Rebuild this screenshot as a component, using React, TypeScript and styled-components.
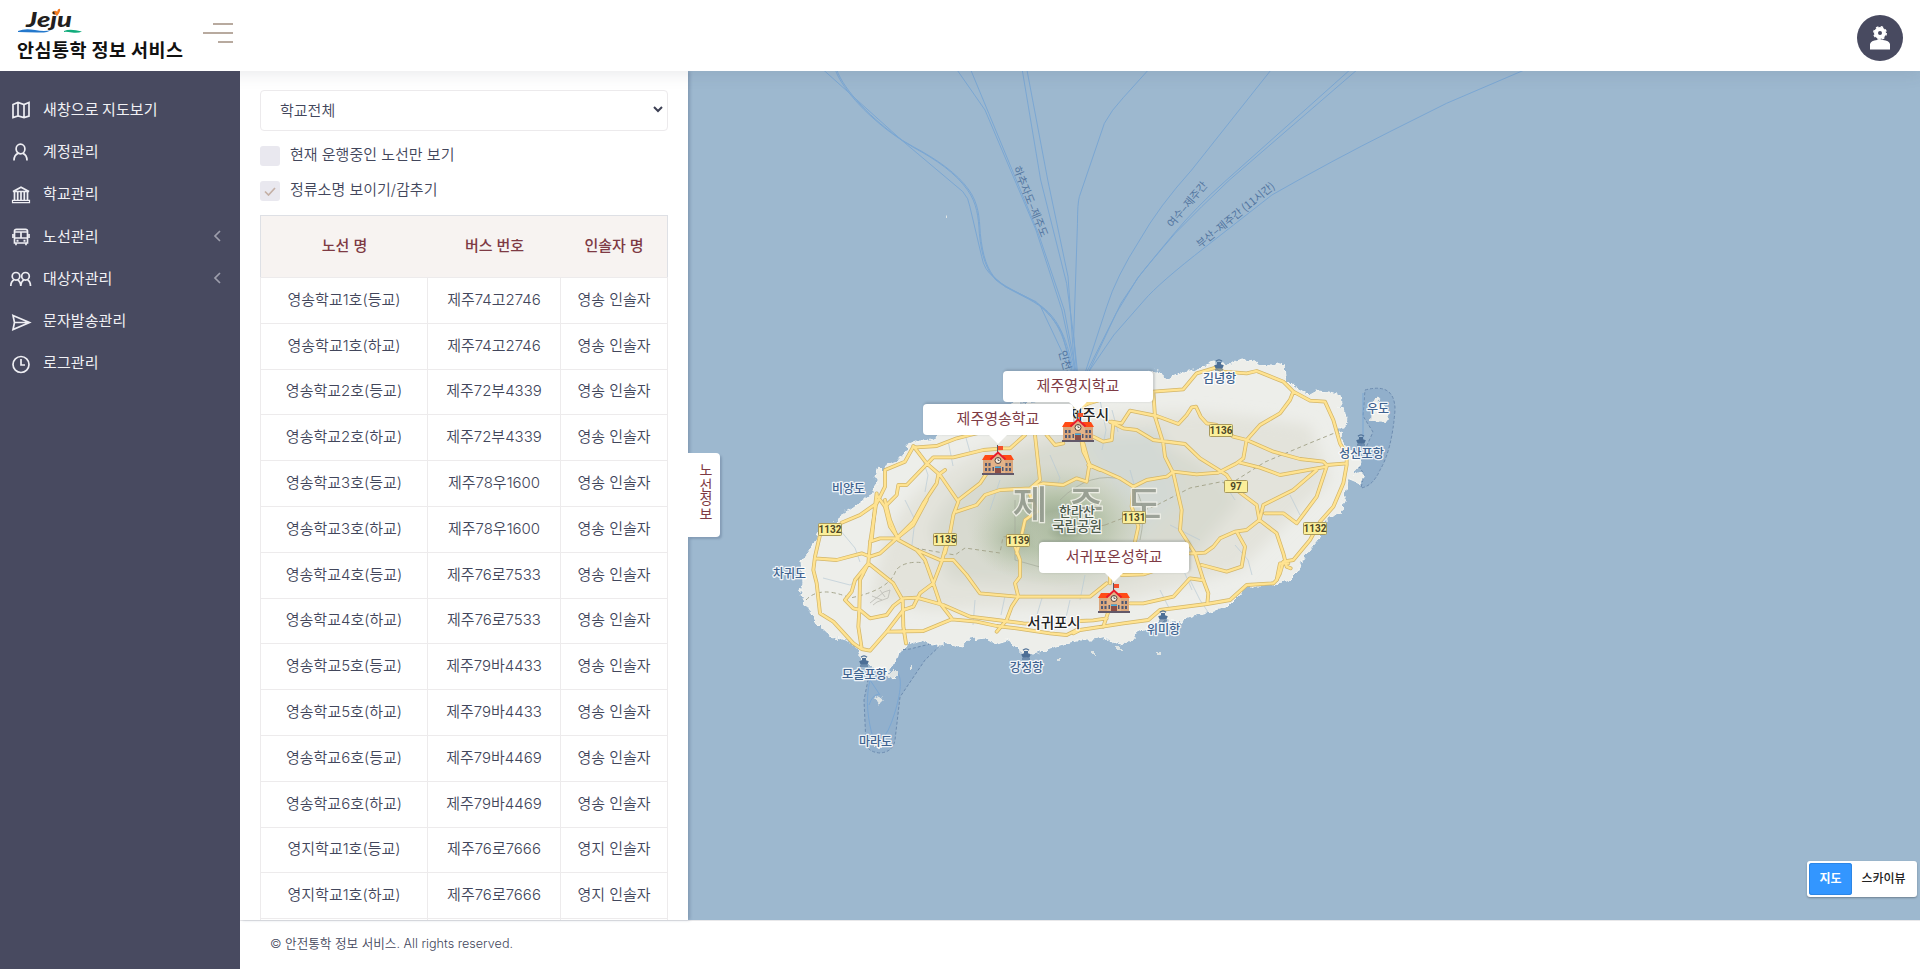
import React from "react";
import styled, { createGlobalStyle } from "styled-components";

const font = `"Inter", "Noto Sans CJK KR", sans-serif`;
const krFont = `"Noto Sans CJK KR", sans-serif`;

const GlobalStyle = createGlobalStyle`
  * { box-sizing: border-box; }
  body { margin: 0; font-family: ${font}; font-size: 15px; font-weight: 350; color: #42465b; background: #fff; overflow: hidden; }
`;

const Page = styled.div`
  display: flex;
  flex-direction: column;
  width: 1920px;
  height: 969px;
`;

const Header = styled.header`
  flex: none;
  height: 71px;
  display: flex;
  align-items: flex-start;
  justify-content: space-between;
  padding-right: 17px;
  background: #fff;
  position: relative;
  z-index: 3;
  box-shadow: 0 2px 16px rgba(70, 75, 95, 0.13);
`;

const Brand = styled.div`
  display: flex;
`;

const Logo = styled.div`
  width: 186px;
  padding: 6px 0 0 17px;
  font-family: ${krFont};
  svg { display: block; overflow: visible; }
`;

const LogoTitle = styled.div`
  margin-top: 1px;
  font-size: 18.5px;
  line-height: 28px;
  font-weight: 700;
  letter-spacing: 0.45px;
  color: #111;
  white-space: nowrap;
`;

const MenuButton = styled.div`
  width: 30px;
  margin: 23px 0 0 17px;
  display: flex;
  flex-direction: column;
  align-items: flex-end;
  gap: 7px;
`;

const MenuLine = styled.span<{ $w: number }>`
  width: ${(p) => p.$w}px;
  height: 2px;
  background: #b8aa9f;
`;

const Avatar = styled.div`
  width: 46px;
  height: 46px;
  margin-top: 15px;
  border-radius: 50%;
  background: #484a60;
  display: flex;
  align-items: center;
  justify-content: center;
`;

const Body = styled.div`
  flex: 1;
  display: flex;
  min-height: 0;
`;

const Sidebar = styled.nav`
  width: 240px;
  flex: none;
  background: #484a60;
  padding-top: 17px;
  position: relative;
  z-index: 4;
`;

const NavItem = styled.div`
  display: flex;
  align-items: center;
  height: 42.3px;
  padding: 0 19px 0 9px;
  color: #f1f1f5;
  font-family: ${krFont};
  font-weight: 400;
`;

const NavIcon = styled.span`
  width: 24px;
  height: 24px;
  margin-right: 10px;
  padding-top: 2px;
  svg { display: block; }
`;

const NavLabel = styled.span`
  flex: 1;
  line-height: 22px;
  margin-top: -1px;
  letter-spacing: 0.1px;
`;

const Main = styled.div`
  flex: 1;
  display: flex;
  flex-direction: column;
  min-width: 0;
`;

const Workspace = styled.div`
  height: 849px;
  display: flex;
`;

const Panel = styled.section`
  width: 448px;
  flex: none;
  padding: 19px 20px 0;
  background: #fff;
  overflow: hidden;
  position: relative;
  z-index: 1;
  box-shadow: 2px 0 3px rgba(60, 80, 110, 0.28);
`;

const SelectBox = styled.div`
  height: 41px;
  border: 1px solid #eceaec;
  border-radius: 4px;
  display: flex;
  align-items: center;
  justify-content: space-between;
  padding: 0 4px 2px 19px;
`;

const Check = styled.div`
  display: flex;
  align-items: center;
  height: 20px;
  margin-top: 15px;
  gap: 10px;
`;

const CheckBox = styled.span`
  width: 20px;
  height: 20px;
  border-radius: 3px;
  background: #e9e8ef;
  display: flex;
  align-items: center;
  justify-content: center;
`;

const CheckText = styled.span`
  line-height: 20px;
  margin-top: -3px;
`;

const Table = styled.div`
  margin-top: 14px;
`;

const Row = styled.div`
  display: grid;
  grid-template-columns: 168px 133px 107px;
  height: 45.8px;
`;

const HeadRow = styled(Row)`
  height: 62px;
  background: #f7f3f1;
  border: 1px solid #dee0e5;
  border-bottom: 0;
  color: #7e3a44;
  font-weight: 500;
  grid-template-columns: 167px 133px 106px;
`;

const Cell = styled.div`
  display: flex;
  align-items: center;
  justify-content: center;
  padding-bottom: 4px;
  border-top: 1px solid #edebec;
  border-right: 1px solid #edebec;
  white-space: pre;
  &:first-child { border-left: 1px solid #edebec; }
`;

const HeadCell = styled(Cell)`
  border: 0;
  &:first-child { border-left: 0; }
`;

const Footer = styled.footer`
  flex: 1;
  border-top: 1px solid #e8e8ea;
  padding: 11px 0 0 30px;
  font-size: 12.6px;
  line-height: 24px;
  background: #fff;
`;

const MapArea = styled.section`
  flex: 1;
  position: relative;
  background: #9db8cf;
  & > svg { display: block; }
`;

const PanelTab = styled.div`
  position: absolute;
  z-index: 2;
  left: 0;
  top: 382px;
  width: 32px;
  height: 84px;
  padding: 10px 7px 0 11px;
  background: #fff;
  border-radius: 0 4px 4px 0;
  box-shadow: 2px 2px 2px rgba(60, 80, 110, 0.25);
  color: #7e3a44;
  font-size: 14px;
  font-weight: 400;
  line-height: 14.6px;
  text-align: center;
`;

const Marker = styled.div<{ $x: number; $y: number }>`
  position: absolute;
  left: ${(p) => p.$x}px;
  top: ${(p) => p.$y}px;
  width: 150px;
  display: flex;
  flex-direction: column;
  align-items: center;
`;

const Bubble = styled.div`
  width: 150px;
  height: 31px;
  border-radius: 4px;
  background: #fff;
  box-shadow: 1px -1px 2px 1px rgba(70, 80, 90, 0.2);
  color: #7e3a44;
  font-weight: 400;
  line-height: 27px;
  text-align: center;
  font-family: ${krFont};
`;

const Arrow = styled.span`
  border: 9px solid transparent;
  border-top-color: #fff;
  border-bottom: 0;
  margin-bottom: 1px;
`;

const Toggle = styled.div`
  position: absolute;
  right: 3px;
  bottom: 23px;
  width: 110px;
  height: 36px;
  padding: 2px;
  display: flex;
  background: #fff;
  border-radius: 3px;
  box-shadow: 0 1px 2px rgba(0, 0, 0, 0.3);
  font: 500 12px/30px ${krFont};
  text-align: center;
`;

const ToggleItem = styled.span<{ $on?: boolean }>`
  width: ${(p) => (p.$on ? 43 : 63)}px;
  height: 32px;
  border-radius: 3px;
  color: ${(p) => (p.$on ? "#fff" : "#222")};
  background: ${(p) => (p.$on ? "#3396ff" : "#fff")};
  font-weight: ${(p) => (p.$on ? 700 : 500)};
  box-shadow: ${(p) => (p.$on ? "inset 0 0 0 1px #2c86e6" : "none")};
`;

/* ---------- sidebar icons ---------- */

const icons: Record<string, React.ReactNode> = {
  map: <path d="M4 5.5 9 3.5 15 5.5 20 3.5V17L15 18.5 9 17 4 18.5ZM9 3.5V17M15 5.5V18.5" />,
  user: (
    <>
      <ellipse cx="11.5" cy="8" rx="4.4" ry="4.8" />
      <path d="M5 19.5C5 16 6.5 13.5 9 12.4M14 12.4C16.5 13.5 18 16 18 19.5" />
    </>
  ),
  bank: (
    <>
      <path d="M4 7.5 12 3.3 20 7.5Z" />
      <path d="M5.5 8V16M8.7 8V16M12 8V16M15.3 8V16M18.5 8V16" />
      <path d="M3.5 16.3H20.5V18.7H3.5Z" strokeWidth="1.2" />
    </>
  ),
  bus: (
    <>
      <path d="M5.5 5Q5.5 3.3 7.5 3.3H16.5Q18.5 3.3 18.5 5V17H5.5ZM5.5 6H18.5M5.5 12H18.5M12 6V12" />
      <path d="M4 8V12M20 8V12M7 17V19.3M17 17V19.3" />
      <path d="M7.5 14.7H9.5M14.5 14.7H16.5" strokeWidth="2" />
    </>
  ),
  users: (
    <>
      <circle cx="7" cy="8.3" r="3.8" />
      <circle cx="16.5" cy="8.3" r="3.8" />
      <path d="M1.8 18C1.8 15 3 13 5 12M8.5 12C10.2 12.8 11.6 14.5 11.8 18 12 14.5 13.2 12.8 15 12M18.5 12C20.5 13 21.5 15 21.5 18" />
    </>
  ),
  send: <path d="M4 4.5 20.5 11.5 4 18.5 5.5 11.5ZM5.5 11.5H20" />,
  clock: (
    <>
      <circle cx="12" cy="11.5" r="8" />
      <path d="M12 6V12H16" />
    </>
  ),
};

const Icon = ({ name }: { name: string }) => (
  <svg width="24" height="24" viewBox="0 0 24 24" fill="none" stroke="#eeeef3" strokeWidth="1.7">
    {icons[name]}
  </svg>
);

const nav = [
  { icon: "map", label: "새창으로 지도보기" },
  { icon: "user", label: "계정관리" },
  { icon: "bank", label: "학교관리" },
  { icon: "bus", label: "노선관리", open: true },
  { icon: "users", label: "대상자관리", open: true },
  { icon: "send", label: "문자발송관리" },
  { icon: "clock", label: "로그관리" },
];

/* ---------- route table ---------- */

const routes: [string, string, string][] = [
  ["영송학교1호(등교)", "제주74고2746", "영송 인솔자"],
  ["영송학교1호(하교)", "제주74고2746", "영송 인솔자"],
  ["영송학교2호(등교)", "제주72부4339", "영송 인솔자"],
  ["영송학교2호(하교)", "제주72부4339", "영송 인솔자"],
  ["영송학교3호(등교)", "제주78우1600", "영송 인솔자"],
  ["영송학교3호(하교)", "제주78우1600", "영송 인솔자"],
  ["영송학교4호(등교)", "제주76로7533", "영송 인솔자"],
  ["영송학교4호(하교)", "제주76로7533", "영송 인솔자"],
  ["영송학교5호(등교)", "제주79바4433", "영송 인솔자"],
  ["영송학교5호(하교)", "제주79바4433", "영송 인솔자"],
  ["영송학교6호(등교)", "제주79바4469", "영송 인솔자"],
  ["영송학교6호(하교)", "제주79바4469", "영송 인솔자"],
  ["영지학교1호(등교)", "제주76로7666", "영지 인솔자"],
  ["영지학교1호(하교)", "제주76로7666", "영지 인솔자"],
  ["", "", ""],
];

/* ---------- map ---------- */

const coast =
  "M820 527L838 522 843 514 852 508 866 498 874 493 878 482 874 476 876 469 884 471 888 463 897 460 903 453 909 450 908 444 918 440 930 440 938 436 950 430 980 415 1010 404 1035 402 1060 390 1090 382 1130 378 1153 371 1160 373 1167 379 1176 375 1183 373 1194 371 1202 366 1215 363 1230 365 1237 361 1242 359 1252 360 1260 366 1270 367 1276 363 1284 365 1285 377 1293 385 1303 392 1310 395 1317 391 1330 392 1340 395 1341 403 1338 407 1345 408 1347 418 1345 427 1338 430 1343 440 1350 450 1360 463 1358 468 1352 472 1355 475 1360 473 1363 478 1360 483 1353 480 1348 478 1347 490 1343 500 1342 512 1330 517 1325 523 1318 540 1307 553 1298 567 1299 571 1290 580 1283 583 1262 585 1247 585 1237 597 1227 607 1207 612 1190 617 1177 622 1160 620 1148 627 1137 632 1130 640 1120 645 1113 642 1107 637 1093 640 1077 640 1060 645 1050 648 1037 653 1026 656 1017 648 1010 640 997 644 983 637 970 639 960 647 943 643 933 645 923 640 910 643 898 652 895 663 888 672 896 674 893 679 883 670 870 667 863 660 857 647 847 640 830 635 817 623 805 603 800 595 803 583 802 560 813 547Z";

// Road geometry is digitised per sheet, at three units per pixel.
const sheets = [
  {
    x: 770, y: 340,
    d: "M215 548L270 525 320 490 345 440 345 390 405 365 430 320 440 322 500 318 560 295 600 285C700 260 830 240 940 195L990 180M430 318L470 370 510 405 565 485 550 525 540 580 525 640M320 465L345 500 380 465 385 435 410 435 490 352 550 352 640 330 700 325 720 325 765 285M560 515L620 495 645 465 690 450 780 445 820 430 880 435 920 415 950 425 958 375 940 310M565 480L630 430 650 400 690 370M385 590L430 545 460 490 500 430 505 405 525 390M320 460L315 500 305 600M345 500L360 560 385 595M795 285L810 420 775 450 800 515 765 540 755 585 740 640M830 285L855 315 880 310M955 375L990 390",
  },
  {
    x: 1080, y: 340,
    d: "M220 155L310 148 350 100 410 82 430 95 500 100 530 93 610 125 640 155 690 182 735 185 760 240 780 310 800 345 800 375 790 430 760 500 720 545 690 600 640 660 610 665 600 700 590 720M640 155L630 180 600 220 540 255 500 300 490 355 470 370 415 398M220 155L225 230 250 310 255 350 280 400 305 510 300 570 345 640 370 720M95 245L125 250 150 212 230 228 295 252 320 225 335 202 348 200 362 230 380 250 410 255 460 290 500 300 580 335 660 357 730 365 740 375 800 370M90 245L130 265 170 270 220 300 315 312 360 355 440 405 470 450 530 495 538 540 590 580 610 640 620 680 632 685M40 290L70 305 95 300 100 250M480 368L540 383 600 405 740 380M740 380L710 470 680 510 650 550 610 520 555 520M540 535L550 495 640 450 710 390M415 398L350 403 280 395 260 410 200 420 160 440 120 415 30 375 10 335 5 305M160 440L155 500 175 560 165 605M538 540L500 570 465 575 420 595 400 620 375 638 345 640 330 640M470 575L495 620 485 680 440 695 365 675M0 205L40 180",
  },
  {
    x: 770, y: 500,
    d: "M150 105L135 170 130 210 140 250 150 340 190 365 250 430 275 447 300 452 350 395 460 393 545 358 620 365 680 378 740 385 840 400 890 405 920 390M135 175L200 180 275 160 300 170 330 160 380 115 430 75 470 0M320 0L300 130 295 190 270 240 268 330 265 380 275 445M295 190L255 240 245 275 225 300 250 325 270 330 300 355 350 345 370 318 400 295 440 293 520 315 600 350 680 360 760 370 790 372M295 190L370 250 398 300 400 380 408 430M350 395L400 330 430 320 450 280 490 250 515 185 530 130M345 0L360 60 385 120 440 150 510 180 550 180 590 225 630 280 740 290 960 290 1010 250M385 115L330 115 300 125M440 150L465 180 490 250 510 310 545 355",
  },
  {
    x: 960, y: 440,
    d: "M730 420L745 460 742 490M950 420L940 430 860 435 810 480 740 492 600 510 565 540 490 550 360 570 340 580M985 370L960 370 950 420M450 430L450 400M175 470L155 500 140 540 110 575M175 470L165 430 180 410 180 360 165 320M510 490L550 490 640 470 690 415 725 420M445 515L430 560M485 405L550 403 590 390M360 543L400 541 440 535",
  },
];

// Ferry lanes, all meeting at Jeju harbour.
const ferry =
  "M50 0L215 210 345 365Q358 385 360 410L385 560Q390 600 410 620L435 650 500 695Q540 745 555 790L577 905M75 0C90 60 150 150 215 210L240 232C290 270 330 310 355 360 375 400 378 440 380 490 385 560 395 600 415 630 440 660 480 680 505 705 540 740 560 790 577 905M78 0C93 60 153 150 218 212L240 230C290 268 333 310 358 360 378 400 380 440 382 490 387 560 397 600 417 630 442 658 480 678 508 705 543 740 563 790 580 905M510 710L575 905M333 0L392 120 500 480 555 720 583 905M362 0L400 130 505 490 560 720 585 905M471 0L510 330 565 640 580 800 586 905M481 0L525 330 568 620 582 905M738 0L685 83Q660 120 645 160L592 380Q588 400 588 460L580 800 588 905M998 0L830 300Q760 410 720 510 670 620 650 710L605 905M1165 0L900 335Q840 410 790 495 740 580 715 625L670 730 608 905M1180 0L910 330Q850 410 795 490 740 580 718 620L680 700 612 905M1535 0L1370 100 1250 185Q1130 270 1000 375L860 530Q760 640 730 690L665 795 612 905";

const Shield = ({ x, y, n }: { x: number; y: number; n: string }) => (
  <g transform={`translate(${x} ${y})`}>
    <rect x="-11.5" y="-6" width="23" height="12" rx="1" fill="#fbef9a" stroke="#a99a5c" />
    <text y="3.6" textAnchor="middle" fontFamily="Roboto" fontSize="10" fontWeight="700" fill="#4d4828">{n}</text>
  </g>
);

const MapText = (p: { x: number; y: number; size: number; color: string; children: React.ReactNode }) => (
  <text x={p.x} y={p.y} fontSize={p.size} fontWeight="500" fill={p.color} stroke="#fff" strokeOpacity="0.85"
    strokeWidth="2.5" strokeLinejoin="round" paintOrder="stroke" textAnchor="middle">{p.children}</text>
);

const Port = ({ x, y, name }: { x: number; y: number; name: string }) => (
  <g transform={`translate(${x} ${y})`}>
    <path d="M-3-3.8Q0-6.5 3-3.8" fill="none" stroke="#4d6f96" strokeWidth="1.3" />
    <path d="M-2-3H2V-0.8L4.8 0.2 3.3 3.8H-3.3L-4.8 0.2-2-0.8Z" fill="#4d6f96" />
    <path d="M-4 5H4" stroke="#4d6f96" strokeWidth="1.2" />
    <MapText x={0.5} y={17.5} size={12.2} color="#3e6390">{name}</MapText>
  </g>
);

const IslandMap = () => (
  <svg width="1232" height="849" viewBox="688 71 1232 849" fontFamily={krFont}>
    <defs>
      <filter id="rough" x="-5%" y="-5%" width="110%" height="110%">
        <feTurbulence type="fractalNoise" baseFrequency="0.14" numOctaves="3" seed="4" result="n" />
        <feDisplacementMap in="SourceGraphic" in2="n" scale="8" xChannelSelector="R" yChannelSelector="G" />
      </filter>
      <filter id="soft" x="-30%" y="-30%" width="160%" height="160%"><feGaussianBlur stdDeviation="7" /></filter>
      <clipPath id="land"><path d={coast} /></clipPath>
      <radialGradient id="peak">
        <stop offset="0" stopColor="#93a389" />
        <stop offset="0.45" stopColor="#b5c2a9" />
        <stop offset="1" stopColor="#c9d0bd" stopOpacity="0" />
      </radialGradient>
    </defs>

    <g transform="translate(800 70) scale(0.4719 0.3333)" fill="none" stroke="#7ba7d3">
      <path d={ferry} vectorEffect="non-scaling-stroke" />
    </g>

    <path d="M1365 390Q1395 382 1395 410 1392 450 1380 470 1373 486 1361 488L1364 474 1358 465 1373 432 1363 416Z" fill="#91afcb" stroke="#6d8cb0" strokeDasharray="3 2" />
    <path d="M898 650L910 649 930 644 943 643 925 660 900 697 895 740Q893 752 880 753 868 752 866 744L864 700 868 680 885 670Z" fill="#92b0cc" stroke="#6d8cb0" strokeDasharray="3 2" />
    <path d="M870 680C865 700 868 720 873 738M895 671C904 675 900 695 895 712Q888 735 882 738M870 680L880 695M869 705Q872 695 879 694M1363 393V440L1360 447" fill="none" stroke="#7ba7d3" />

    <g filter="url(#rough)">
      <path d={coast} fill="#edeeea" stroke="#f6f6f2" strokeWidth="1" />
      <path d="M1372 405L1376 396 1382 403 1390 415 1387 423 1371 422Z" fill="#edeeea" />
      <path d="M874 699L880 696 884 701 879 706ZM890 671H896V678H890ZM874 744H880V749H874ZM1057 659H1060V662H1057ZM1092 651H1096V654H1092ZM1117 648H1121V651H1117ZM1157 653H1161V656H1157ZM909 665H912V668H909ZM944 216H945.500V218H944Z" fill="#dfe4e3" />
    </g>

    <g clipPath="url(#land)">
      <g filter="url(#soft)">
        <path d="M880 560C900 480 970 445 1060 425S1210 410 1310 425L1330 480 1240 570 1110 605 930 610 870 600Z" fill="#e3e3db" />
        <path d="M930 530C960 470 1010 450 1080 435S1220 470 1240 500L1190 560 1090 590 950 580Z" fill="#d8dad0" />
        <path d="M1080 435L1160 430 1180 500 1140 540Z" fill="#d3d9d4" />
      </g>
      <ellipse cx="1058" cy="525" rx="92" ry="62" fill="url(#peak)" />
      <ellipse cx="1015" cy="540" rx="45" ry="36" fill="url(#peak)" opacity="0.45" />
      <ellipse cx="1066" cy="532" rx="44" ry="22" fill="url(#peak)" opacity="0.8" />
      <g fill="none" stroke="#b4c8d4" strokeWidth="0.7" opacity="0.9">
        <path d="M920 452L928 475 925 492M948 440L953 466M966 438L970 452M1000 480L990 510M1100 400L1106 430 1102 450M1112 410L1118 432M1050 455L1060 478 1055 490M1130 470L1134 484M905 500L915 520 912 545M840 530L855 548 860 562M823 578L850 585 865 575M1070 600L1065 622M1042 598L1036 618M1005 596L1001 615M975 600L973 625M1085 575L1080 600M1190 580L1200 600 1210 615M1235 545L1248 560 1252 575M1170 525L1200 540M1290 495L1300 515M1222 480L1235 500M1150 550L1180 562 1192 590M1160 590L1170 610" />
      </g>
      <path d="M806 600Q820 585 850 598 890 590 896 570 905 560 925 563M915 548L955 555 965 548 1000 553 1003 537 1015 535M1105 525L1155 506 1190 488 1220 482 1230 484 1265 462 1310 443 1337 432M1105 525L1080 530" fill="none" stroke="#a7a78f" strokeWidth="1" strokeDasharray="4 3" />
      <path d="M1060 500Q1090 470 1125 480 1150 495 1140 540M1015 500V560L1040 567 1055 555" fill="none" stroke="#a5aa9b" strokeWidth="0.7" />
      <path d="M870 603L884 592 890 590 888 598 877 602 873 605M872 596L882 600M880 590L885 597" fill="none" stroke="#bfc0b9" strokeWidth="0.9" />
    </g>

    {[["#d3b669", 11.5], ["#ffe391", 7.2]].map(([c, w]) => (
      <g key={String(c)} fill="none" stroke={String(c)} strokeWidth={w} strokeLinejoin="round" strokeLinecap="round">
        {sheets.map((s) => (
          <path key={`${s.x}-${s.y}`} transform={`translate(${s.x} ${s.y}) scale(0.33333)`} d={s.d} />
        ))}
      </g>
    ))}

    <g fontSize="38" fontWeight="500" fill="#959b90" stroke="#f1f1e9" strokeWidth="2.5" paintOrder="stroke" textAnchor="middle" opacity="0.88">
      <text x="1030" y="518">제</text>
      <text x="1086" y="518">주</text>
      <text x="1144" y="518">도</text>
    </g>
    <MapText x={1077} y={516} size={13} color="#4d5b4c">한라산</MapText>
    <MapText x={1077} y={531} size={13.5} color="#4d5b4c">국립공원</MapText>
    <MapText x={1089} y={420} size={14.5} color="#222">제주시</MapText>
    <MapText x={1054} y={628} size={14.5} color="#222">서귀포시</MapText>
    <MapText x={848.5} y={493} size={12} color="#3e6390">비양도</MapText>
    <MapText x={789.5} y={578} size={12} color="#3e6390">차귀도</MapText>
    <MapText x={1378} y={413} size={12} color="#3e6390">우도</MapText>
    <MapText x={875.5} y={746} size={12} color="#3e6390">마라도</MapText>
    <Port x={1219} y={365} name="김녕항" />
    <Port x={1361} y={440} name="성산포항" />
    <Port x={864} y={661} name="모슬포항" />
    <Port x={1026} y={654} name="강정항" />
    <Port x={1163} y={616} name="위미항" />

    <Shield x={1221} y={430.5} n="1136" />
    <Shield x={1236} y={486.5} n="97" />
    <Shield x={1134} y={517.5} n="1131" />
    <Shield x={1315} y={528.5} n="1132" />
    <Shield x={830} y={529.5} n="1132" />
    <Shield x={945} y={539.5} n="1135" />
    <Shield x={1018} y={540.5} n="1139" />

    <g fontSize="10.8" fill="#52759f" textAnchor="middle" fontWeight="400">
      <text transform="translate(1027 203) rotate(68)">하추자도–제주도</text>
      <text transform="translate(1190 207) rotate(-50)">여수–제주간</text>
      <text transform="translate(1238 218) rotate(-39)">부산–제주간 (11시간)</text>
      <text transform="translate(1062 364) rotate(74)">인천–</text>
    </g>
  </svg>
);

const School = () => (
  <svg width="32" height="31" viewBox="0 0 32 31">
    <path d="M15.5 0V8" stroke="#5b5560" />
    <path d="M16 1H21V5H16Z" fill="#f4512c" />
    <path d="M1 15H31V28H1Z" fill="#d9a67c" />
    <path d="M9 14 16 8 23 14V28H9Z" fill="#e3b388" />
    <path d="M3 10H12L9 15H0ZM20 10H29L32 15H23Z" fill="#ff4b16" />
    <path d="M8.5 14.5 16 7.5 23.5 14.5" fill="none" stroke="#e81c2c" strokeWidth="2" />
    <circle cx="16" cy="15.5" r="3" fill="#f7eee0" stroke="#55443f" />
    <path d="M16 13.5V15.5H17.5" fill="none" stroke="#333" strokeWidth="0.7" />
    <path d="M3 18H5V21H3ZM6.5 18H8.5V21H6.5ZM3 23H5V26H3ZM6.5 23H8.5V26H6.5ZM23.5 18H25.5V21H23.5ZM27 18H29V21H27ZM23.5 23H25.5V26H23.5ZM27 23H29V26H27ZM10.5 22H12V26H10.5ZM20 22H21.5V26H20Z" fill="#4f5873" />
    <path d="M13 21.5H19V28H13Z" fill="#8c4d46" />
    <path d="M13 21.5H19V23H13Z" fill="#45aee0" />
    <path d="M0 28H32V30H0Z" fill="#62596a" />
  </svg>
);

const schools = [
  { name: "제주영송학교", x: 235, y: 333 },
  { name: "제주영지학교", x: 315, y: 300 },
  { name: "서귀포온성학교", x: 351, y: 471 },
];

export default function App() {
  return (
    <Page>
      <GlobalStyle />
      <Header>
        <Brand>
          <Logo>
            <svg width="70" height="28" viewBox="0 -2 70 28">
              <text x="9" y="18.5" fontFamily="Lato" fontSize="20" fontWeight="900" fontStyle="italic" textLength="46" lengthAdjust="spacingAndGlyphs" fill="#231f20">Jeju</text>
              <path d="M37 3Q39 2 40 4 41 0 43 1 44 3 40 8 37 6 37 3Z" fill="#f47b20" />
              <path d="M1 23Q8 20 18 22T34 22Q31 25 20 24.5T1 24Z" fill="#2478cc" />
              <path d="M47 23Q53 20.5 65 23.5 61 25.5 55 24.5T47 24Z" fill="#12ac7c" />
            </svg>
            <LogoTitle>안심통학 정보 서비스</LogoTitle>
          </Logo>
          <MenuButton>
            <MenuLine $w={20} />
            <MenuLine $w={30} />
            <MenuLine $w={15} />
          </MenuButton>
        </Brand>
        <Avatar>
          <svg width="22" height="24" viewBox="0 0 22 24" fill="#fff">
            <circle cx="11" cy="7" r="4" fill="none" stroke="#fff" strokeWidth="4" />
            <circle cx="11" cy="7" r="6.2" fill="none" stroke="#fff" strokeWidth="1.5" strokeDasharray="2.5 2.37" />
            <path d="M1 23.5V18Q2 14.5 8 14L11 13 14 14Q20 14.5 21 18V23.5Z" />
          </svg>
        </Avatar>
      </Header>
      <Body>
        <Sidebar>
          {nav.map((n) => (
            <NavItem key={n.label}>
              <NavIcon><Icon name={n.icon} /></NavIcon>
              <NavLabel>{n.label}</NavLabel>
              {n.open && (
                <svg width="8" height="12" viewBox="0 0 8 12" fill="none" stroke="#9d9eac" strokeWidth="1.7">
                  <path d="M7 1 2 6 7 11" />
                </svg>
              )}
            </NavItem>
          ))}
        </Sidebar>
        <Main>
          <Workspace>
            <Panel>
              <SelectBox>
                <span>학교전체</span>
                <svg width="10" height="7" viewBox="0 0 10 7" fill="none" stroke="#3d4054" strokeWidth="2">
                  <path d="M1 1 5 5 9 1" />
                </svg>
              </SelectBox>
              <Check>
                <CheckBox />
                <CheckText>현재 운행중인 노선만 보기</CheckText>
              </Check>
              <Check>
                <CheckBox>
                  <svg width="12" height="9" viewBox="0 0 12 9" fill="none" stroke="#c4b0a6" strokeWidth="1.7">
                    <path d="M1 4.5 4.5 8 11 1" />
                  </svg>
                </CheckBox>
                <CheckText>정류소명 보이기/감추기</CheckText>
              </Check>
              <Table>
                <HeadRow>
                  <HeadCell>노선 명</HeadCell>
                  <HeadCell>버스 번호</HeadCell>
                  <HeadCell>인솔자 명</HeadCell>
                </HeadRow>
                {routes.map((r, i) => (
                  <Row key={i}>
                    {r.map((text, c) => (
                      <Cell key={c}>{text}</Cell>
                    ))}
                  </Row>
                ))}
              </Table>
            </Panel>
            <MapArea>
              <IslandMap />
              {schools.map((s) => (
                <Marker key={s.name} $x={s.x} $y={s.y}>
                  <Bubble>{s.name}</Bubble>
                  <Arrow />
                  <School />
                </Marker>
              ))}
              <PanelTab>노선정보</PanelTab>
              <Toggle>
                <ToggleItem $on>지도</ToggleItem>
                <ToggleItem>스카이뷰</ToggleItem>
              </Toggle>
            </MapArea>
          </Workspace>
          <Footer>© 안전통학 정보 서비스. All rights reserved.</Footer>
        </Main>
      </Body>
    </Page>
  );
}
